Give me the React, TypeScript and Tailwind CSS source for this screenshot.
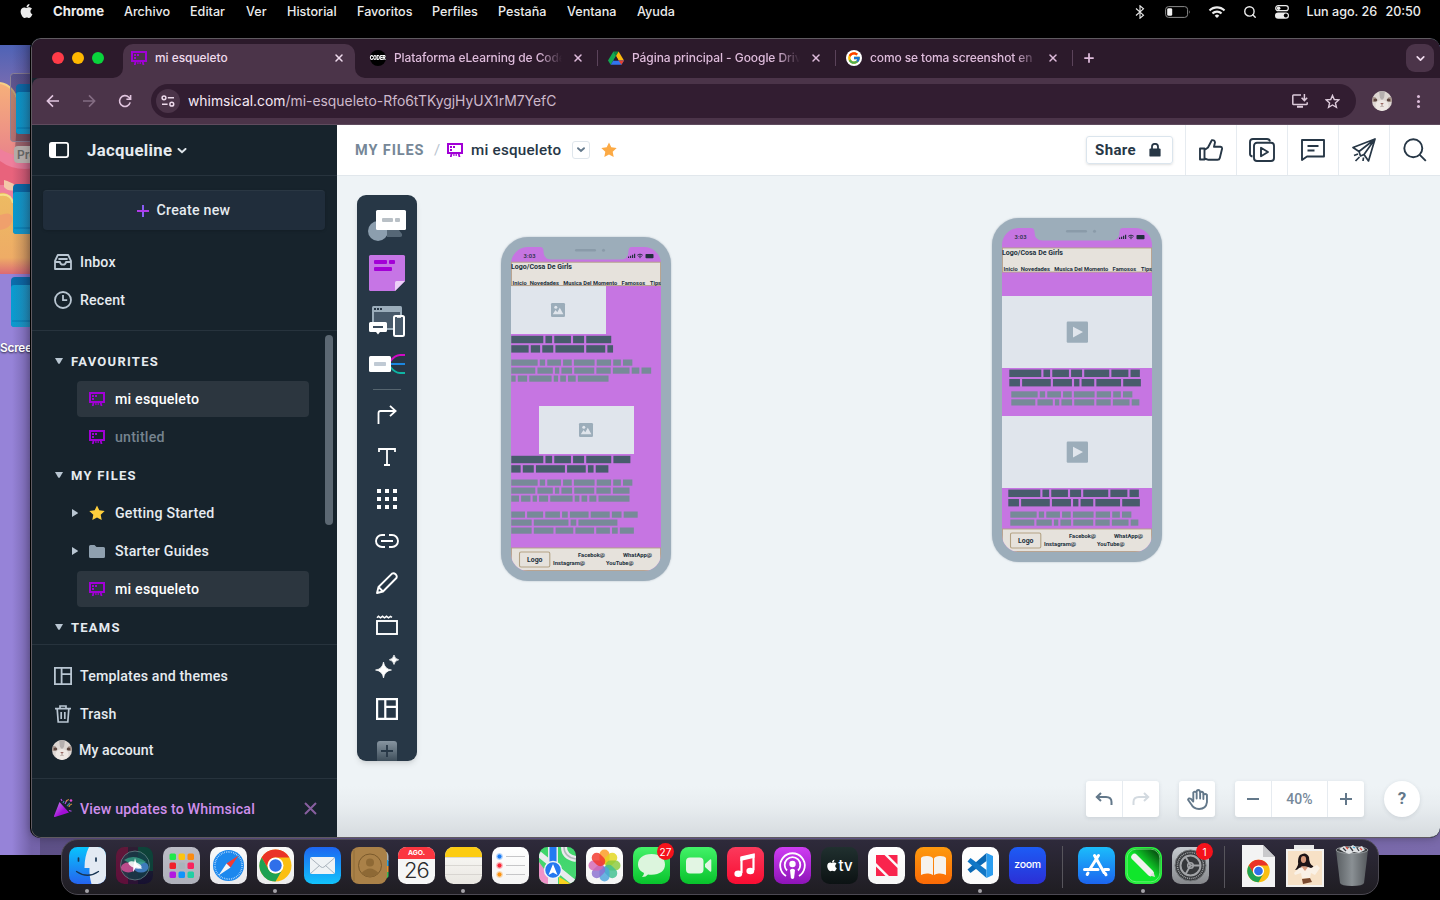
import React from "react";
import { FaApple } from "react-icons/fa";
import { FcGoogle } from "react-icons/fc";
import { MdWifi } from "react-icons/md";
import { ChevronDown, Plus, Search, X } from "lucide-react";

/* ---------- shared drawings ---------- */

function BoardIcon({ className = "" }: { className?: string }) {
  return (
    <svg viewBox="0 0 16 14" className={"h-[14px] w-[16px] shrink-0 " + className} fill="#a100d6">
      <path fillRule="evenodd" d="M0 0h16v11H0zM2 2v7h12v-7z" />
      <rect x="3" y="3" width="2" height="2" />
      <rect x="6" y="3" width="2" height="2" />
      <rect x="3" y="6" width="2" height="2" />
      <path d="M3.6 10.5h1.9L4.7 14H2.9zM6.3 10.5h1.2v2.4H6.3zM8.6 10.5h1.2v2.4H8.6zM10.7 10.5h1.9l.8 3.5h-1.8z" />
    </svg>
  );
}

function Avatar({ className = "" }: { className?: string }) {
  return (
    <svg viewBox="0 0 20 20" className={"h-5 w-5 shrink-0 " + className}>
      <defs>
        <clipPath id="avatarClip"><circle cx="10" cy="10" r="10" /></clipPath>
      </defs>
      <g clipPath="url(#avatarClip)">
        <rect width="20" height="20" fill="#ddd6d2" />
        <path d="M7 0h6l-1 7-2 2-2-2z" fill="#b5afae" />
        <ellipse cx="1.500" cy="8.500" rx="3" ry="2.400" fill="#a8968e" />
        <ellipse cx="18.500" cy="8.500" rx="3" ry="2.400" fill="#a8968e" />
        <ellipse cx="3.400" cy="9" rx="1.900" ry="1.600" fill="#5d463f" />
        <ellipse cx="16.600" cy="9" rx="1.900" ry="1.600" fill="#5d463f" />
        <ellipse cx="10" cy="14.500" rx="6.500" ry="5.500" fill="#eee8e4" />
        <path d="M8.2 12h3.600L10 14z" fill="#9a6a64" />
        <path d="M10 13.700v1.300M8.400 15.600q1.600-1 3.200 0" stroke="#8d7a74" strokeWidth=".6" fill="none" />
      </g>
    </svg>
  );
}

function ChromeLogo() {
  return (
    <g>
      <circle cx="0" cy="0" r="16" fill="#fbbf12" />
      <path d="M-13.86-8A16 16 0 0 1 13.86-8H0A8 8 0 0 0-7 4z" fill="#ea3327" />
      <path d="M-13.86-8L-6.93 4A8 8 0 0 0 6.93 4L0 16A16 16 0 0 1-13.86-8z" fill="#1fa253" />
      <circle r="8" fill="#fff" />
      <circle r="6.2" fill="#2f6fea" />
    </g>
  );
}

/* ---------- desktop ---------- */

function Folder({ y }: { y: number }) {
  return (
    <g>
      <rect x="13" y={y} width="40" height="50" rx="4" fill="#0a6fae" />
      <rect x="13" y={y + 8} width="40" height="42" rx="3" fill="url(#folderFront)" />
      <path d={`M14 ${y + 44}h40`} stroke="#047fb8" />
    </g>
  );
}

function Wallpaper() {
  return (
    <svg viewBox="0 0 40 810" className="h-[810px] w-10" preserveAspectRatio="none">
      <defs>
        <linearGradient id="wallSky" x1="0" y1="0" x2="0" y2="1">
          <stop offset="0" stopColor="#4e63b6" />
          <stop offset="1" stopColor="#8a6fae" />
        </linearGradient>
        <linearGradient id="wallOrange" x1="0" y1="0" x2="0" y2="1">
          <stop offset="0" stopColor="#f6b07a" />
          <stop offset="1" stopColor="#e8808c" />
        </linearGradient>
        <linearGradient id="wallGold" x1="0" y1="0" x2="0" y2="1">
          <stop offset="0" stopColor="#edbb62" />
          <stop offset=".8" stopColor="#eeac66" />
          <stop offset="1" stopColor="#dc6a74" />
        </linearGradient>
        <linearGradient id="wallEdge" x1="0" y1="0" x2="1" y2="0">
          <stop offset=".3" stopColor="#1b1030" stopOpacity="0" />
          <stop offset=".78" stopColor="#1b1030" stopOpacity=".28" />
        </linearGradient>
        <linearGradient id="folderFront" x1="0" y1="0" x2="1" y2="0">
          <stop offset="0" stopColor="#079bd0" />
          <stop offset="1" stopColor="#3fb6e0" />
        </linearGradient>
      </defs>
      <rect width="40" height="810" fill="#9683d8" />
      <rect width="40" height="60" fill="url(#wallSky)" />
      <path d="M0 38Q14 40 18 62V120H0z" fill="url(#wallOrange)" />
      <path d="M18 60h22v60H14z" fill="#a3676c" />
      <path d="M0 38Q14 40 18 58" stroke="#f6cf86" strokeWidth="2" fill="none" />
      <path d="M0 104Q20 116 40 108V180H0z" fill="#ef7f9c" />
      <path d="M0 116Q16 128 40 122V140H0z" fill="#e8637c" />
      <path d="M4 135q14 4 12 10-8 2-12-3z" fill="#f4c8a8" />
      <path d="M0 148Q12 146 14 165L40 175V229H0z" fill="url(#wallGold)" />
      <path d="M0 150Q11 148 13 158" stroke="#f5e08a" strokeWidth="2" fill="none" />
      <path d="M0 170Q14 165 12 176 10 184 0 185z" fill="#f0a06c" />
      <rect x="10.5" y="28.5" width="40" height="68" rx="3" fill="#2b2440" fillOpacity=".3" stroke="#8d8397" />
      <g transform="translate(3 -1)"><Folder y={40} /></g>
      <Folder y={139} />
      <g transform="translate(-2 0)"><Folder y={232} /></g>
      <rect width="40" height="810" fill="url(#wallEdge)" />
    </svg>
  );
}

const menus: [string, string][] = [
  ["Archivo", "w-[66px]"],
  ["Editar", "w-[56px]"],
  ["Ver", "w-[41px]"],
  ["Historial", "w-[70px]"],
  ["Favoritos", "w-[75px]"],
  ["Perfiles", "w-[66px]"],
  ["Pestaña", "w-[69px]"],
  ["Ventana", "w-[70px]"],
  ["Ayuda", "w-[40px]"],
];

function MenuBar() {
  return (
    <div className="flex h-6 items-center whitespace-nowrap bg-black text-[12.6px] font-medium text-[#ececec]">
      <FaApple className="-mt-0.5 ml-[19px] h-4 w-[15px]" />
      <span className="ml-[19px] w-[71px] text-[13.200px] font-bold">Chrome</span>
      {menus.map(([label, width]) => (
        <span key={label} className={width}>{label}</span>
      ))}
      <div className="ml-auto flex items-center pr-[19px]">
        <svg viewBox="0 0 10 14" className="h-[14px] w-[10px]" fill="none" stroke="#ececec" strokeWidth="1.100">
          <path d="M1 3.500l7.500 6.700L5 13.200V.8l3.500 3L1 10.500" />
        </svg>
        <svg viewBox="0 0 26 12" className="ml-[20px] h-3 w-[26px]">
          <rect x=".6" y=".6" width="22" height="10.8" rx="3" fill="none" stroke="#8b8b8b" />
          <rect x="2.2" y="2.2" width="5" height="7.6" rx="1.4" fill="#f2f2f2" />
          <path d="M24 4.2q1.6 1.8 0 3.6z" fill="#8b8b8b" />
        </svg>
        <MdWifi className="ml-[17px] h-[18px] w-[18px]" />
        <Search className="ml-[17px] h-[14px] w-[14px]" strokeWidth={2.4} />
        <svg viewBox="0 0 14 14" className="ml-[18px] h-[14px] w-[14px]">
          <rect x=".7" y=".7" width="12.6" height="5" rx="2.5" fill="none" stroke="#ececec" strokeWidth="1.2" />
          <circle cx="3.6" cy="3.2" r="1.8" fill="#ececec" />
          <rect x="0" y="7.4" width="14" height="6.4" rx="3.2" fill="#ececec" />
          <circle cx="10.8" cy="10.6" r="2" fill="#000" />
        </svg>
        <span className="ml-[17px] w-[79px]">Lun ago. 26</span>
        <span>20:50</span>
      </div>
    </div>
  );
}

/* ---------- browser chrome ---------- */

function TabFavicon({ kind }: { kind: string }) {
  if (kind === "google")
    return (
      <span className="flex h-4 w-4 items-center justify-center rounded-full bg-white">
        <FcGoogle className="h-[14px] w-[14px]" />
      </span>
    );
  if (kind === "drive")
    return (
      <svg viewBox="0 0 16 14" className="h-[14px] w-4">
        <path d="M5.4.5h5.2L8 5z" fill="#0a8a3e" />
        <path d="M5.4.5L0 9.6l2.7 4.2L8 5z" fill="#12a852" />
        <path d="M10.6.5L16 9.6h-5.4L8 5z" fill="#fcb80c" />
        <path d="M5.3 9.6H16l-2.6 4.2H2.7z" fill="#3175ee" />
        <path d="M16 9.6l-2.6 4.2-2.8-4.2z" fill="#e8402f" />
        <path d="M8 5.3l2.5 4.3h-5z" fill="#2c1a2b" />
      </svg>
    );
  return (
    <span className="flex h-4 w-4 items-center justify-center rounded-full bg-black">
      <span className="-mx-1 scale-x-75 text-[6.500px] font-black leading-none tracking-tighter text-white">CODER</span>
    </span>
  );
}

function Tab({ kind, title, spacing }: { kind: string; title: string; spacing: string }) {
  return (
    <div className="flex h-[34px] w-[238px] shrink-0 items-center pl-[11px]">
      <span className="flex w-4 shrink-0 justify-center"><TabFavicon kind={kind} /></span>
      <span className={"ml-2 w-[168px] whitespace-nowrap [mask-image:linear-gradient(to_right,#000_145px,transparent_168px)] " + spacing}>
        {title}
      </span>
      <X className="ml-[10px] h-3 w-3 shrink-0" strokeWidth={3} />
      <span className="ml-[13px] h-4 w-px shrink-0 bg-[#5b435a]" />
    </div>
  );
}

function TabStrip() {
  return (
    <div className="flex h-[39px] items-start bg-[#2c1a2b] pt-[5px] text-[12px] font-medium text-[#dfbcdc]">
      <div className="flex h-[28px] w-[81px] items-center gap-2 pl-[20px]">
        <span className="h-3 w-3 rounded-full bg-[#ff3b48]" />
        <span className="h-3 w-3 rounded-full bg-[#ffb800]" />
        <span className="h-3 w-3 rounded-full bg-[#09d43c]" />
      </div>
      <svg viewBox="0 0 10 10" className="mt-6 h-[10px] w-[10px]"><path d="M0 10A10 10 0 0 0 10 0V10z" fill="#4b3449" /></svg>
      <div className="flex h-[34px] w-[232px] items-center rounded-t-[10px] bg-[#4b3449] pb-[6px] pl-2 text-[#f0dcee]">
        <BoardIcon />
        <span className="ml-2 w-[178px] whitespace-nowrap text-[11.900px]">mi esqueleto</span>
        <X className="h-3 w-3" strokeWidth={3} />
      </div>
      <svg viewBox="0 0 10 10" className="mt-6 h-[10px] w-[10px]"><path d="M0 0A10 10 0 0 0 10 10H0z" fill="#4b3449" /></svg>
      <div className="-ml-[6px] flex h-7 items-center">
        <Tab kind="coder" title="Plataforma eLearning de Code" spacing="tracking-[-0.090px]" />
        <Tab kind="drive" title="Página principal - Google Driv" spacing="tracking-[-0.060px]" />
        <Tab kind="google" title="como se toma screenshot en" spacing="tracking-[-0.120px]" />
        <Plus className="ml-[9px] h-[14px] w-[14px]" strokeWidth={3} />
      </div>
      <div className="ml-auto mr-[6px] flex h-7 w-7 items-center justify-center rounded-[9px] bg-[#4b3449] text-[#f0dcee]">
        <ChevronDown className="h-[13px] w-[13px]" strokeWidth={3.2} />
      </div>
    </div>
  );
}

function Toolbar() {
  return (
    <div className="flex h-[47px] items-center rounded-tl-[8px] border-b border-[#5f4b5e] bg-[#4b3449] text-[#e0c4de]">
      <svg viewBox="0 0 14 14" className="ml-[14px] h-[14px] w-[14px]" fill="none" stroke="currentColor" strokeWidth="1.6">
        <path d="M13 7H1.6M7 1.4L1.4 7 7 12.6" />
      </svg>
      <svg viewBox="0 0 14 14" className="ml-[22px] h-[14px] w-[14px] text-[#836c82]" fill="none" stroke="currentColor" strokeWidth="1.6">
        <path d="M1 7h11.4M7 1.4L12.6 7 7 12.6" />
      </svg>
      <svg viewBox="0 0 14 14" className="ml-[22px] h-[14px] w-[14px]" fill="none" stroke="currentColor" strokeWidth="1.6">
        <path d="M12.2 8.4A5.4 5.4 0 1 1 10.8 3.2L12.4 4.8M12.6 1v4.2H8.4" />
      </svg>
      <div className="ml-[19px] flex h-[34px] w-[1205px] items-center rounded-full bg-[#321d31] pl-[5px]">
        <span className="flex h-6 w-6 items-center justify-center rounded-full bg-[#4b3449]">
          <svg viewBox="0 0 14 12" className="h-3 w-[14px]" fill="none" stroke="#eedbec" strokeWidth="1.5">
            <circle cx="3" cy="2.8" r="1.9" />
            <path d="M6.8 2.8H13M1 9.2h5.6" />
            <circle cx="10.8" cy="9.2" r="1.9" />
          </svg>
        </span>
        <span className="ml-2 whitespace-nowrap text-[13.900px] text-[#cdb9cb]">
          <span className="text-[#f6e9f5]">whimsical.com</span>/mi-esqueleto-Rfo6tTKygjHyUX1rM7YefC
        </span>
        <svg viewBox="0 0 16 14" className="ml-auto h-[14px] w-4" fill="none" stroke="#dccada" strokeWidth="1.5">
          <path d="M9 .9H1.6q-.8 0-.8.8v8q0 .8.8.8h12.8q.8 0 .8-.8V8.2M12.4 0v6M9.6 3.8l2.8 2.8 2.8-2.8" />
          <path d="M5 12.7h6" strokeWidth="2" />
        </svg>
        <svg viewBox="0 0 16 16" className="ml-[17px] mr-[16px] h-[15px] w-[15px]" fill="none" stroke="#dccada" strokeWidth="1.5">
          <path d="M8 1.5l1.9 4.4 4.8.4-3.6 3.2 1.1 4.7L8 11.700l-4.200 2.500 1.100-4.700L1.300 6.300l4.800-.4z" />
        </svg>
      </div>
      <Avatar className="ml-4" />
      <div className="ml-[25px] flex flex-col gap-[2px]">
        <span className="h-[3px] w-[3px] rounded-full bg-[#dcbcd9]" />
        <span className="h-[3px] w-[3px] rounded-full bg-[#dcbcd9]" />
        <span className="h-[3px] w-[3px] rounded-full bg-[#dcbcd9]" />
      </div>
    </div>
  );
}

/* ---------- sidebar ---------- */

function LayoutGlyph({ size }: { size: string }) {
  return (
    <svg viewBox="0 0 18 18" className={size} fill="none" stroke="currentColor" strokeWidth="1.8">
      <path d="M.9.9h16.2v16.2H.9zM7.6.9v16.2M7.6 7.2h9.5" />
    </svg>
  );
}

function SideLink({ icon, label }: { icon: React.ReactNode; label: string }) {
  return (
    <div className="flex h-[38px] items-center gap-2 pl-[21px]">
      <span className="-mt-px flex w-5 justify-center text-[#b9c6d2]">{icon}</span>
      <span className="-ml-px pt-[2px]">{label}</span>
    </div>
  );
}

function SectionTitle({ label }: { label: string }) {
  return (
    <div className="flex h-[38px] items-center pl-[23px] text-[13px] font-bold tracking-[1.250px]">
      <svg viewBox="0 0 8 6" className="h-[6px] w-2"><path d="M0 0h8L4.8 5.4q-.8.8-1.600 0z" fill="#b9c6d2" /></svg>
      <span className="ml-2 pt-[2px]">{label}</span>
    </div>
  );
}

function FileRow({ label, state }: { label: string; state: string }) {
  return (
    <div className="flex h-[38px] items-center pl-[45px]">
      <div className={"flex h-9 w-[232px] items-center rounded-[4px] pl-3 " + (state === "active" ? "bg-[#2c363f] text-white" : "text-[#76838f]")}>
        <BoardIcon />
        <span className="ml-[10px] pt-[2px] tracking-[0.200px]">{label}</span>
      </div>
    </div>
  );
}

function TreeRow({ icon, label }: { icon: React.ReactNode; label: string }) {
  return (
    <div className="flex h-[38px] items-center pl-[40px]">
      <svg viewBox="0 0 6 8" className="h-2 w-[6px]"><path d="M0 0L5.6 3.400q.6.6 0 1.200L0 8z" fill="#b9c6d2" /></svg>
      <span className="ml-[11px] flex w-4 justify-center">{icon}</span>
      <span className="ml-[10px] pt-[2px] tracking-[0.200px]">{label}</span>
    </div>
  );
}

const starPath = "M8 .4l2.300 4.900 5.400.7-4 3.700 1 5.300L8 12.400 3.300 15l1-5.300-4-3.700 5.400-.7z";

function Sidebar() {
  return (
    <aside className="flex w-[305px] shrink-0 flex-col bg-[#17232c] font-[Roboto,sans-serif] text-[14.2px] font-medium tracking-[0.150px] text-[#e6ebf0]">
      <div className="flex h-[51px] items-center border-b border-[#27333d] pl-[17px]">
        <svg viewBox="0 0 20 16" className="h-4 w-5">
          <rect x=".9" y=".9" width="18.2" height="14.2" rx="2" fill="none" stroke="#fff" strokeWidth="1.8" />
          <path d="M1 1h6v14H1z" fill="#fff" />
        </svg>
        <span className="ml-[18px] pt-px text-[16.700px] font-bold tracking-[0.350px]">Jacqueline</span>
        <svg viewBox="0 0 10 6" className="ml-[5px] mt-0.5 h-[6px] w-[10px]" fill="none" stroke="#dfe5ea" strokeWidth="2" strokeLinecap="round">
          <path d="M1.5 1L5 4.2 8.5 1" />
        </svg>
      </div>
      <div className="h-[155px] border-b border-[#27333d] pt-[14px]">
        <div className="mb-[13px] ml-[11px] flex h-10 w-[282px] items-center justify-center rounded-[4px] border-t border-[#2a3743] bg-[#202d3b] pr-px shadow">
          <svg viewBox="0 0 12 12" className="mr-2 h-3 w-3">
            <path d="M6 0v12" stroke="#8b5cf6" strokeWidth="2" />
            <path d="M0 6h12" stroke="#b03be8" strokeWidth="2" />
          </svg>
          <span className="tracking-[0.250px]">Create new</span>
        </div>
        <SideLink
          label="Inbox"
          icon={
            <svg viewBox="0 0 18 16" className="h-4 w-[18px]" fill="none" stroke="currentColor" strokeWidth="1.8" strokeLinejoin="round">
              <path d="M1 7L3.800 1h10.400L17 7v8H1zM1.400 8H6q.4 2.600 3 2.600T12 8h4.600M4.400 5h9.200" />
            </svg>
          }
        />
        <SideLink
          label="Recent"
          icon={
            <svg viewBox="0 0 18 18" className="h-[18px] w-[18px]" fill="none" stroke="currentColor" strokeWidth="1.8">
              <circle cx="9" cy="9" r="8" />
              <path d="M9 4v5.200h4.200" />
            </svg>
          }
        />
      </div>
      <div className="flex h-[314px] overflow-hidden border-b border-[#27333d]">
        <div className="w-[293px] pt-[11px]">
          <SectionTitle label="FAVOURITES" />
          <FileRow label="mi esqueleto" state="active" />
          <FileRow label="untitled" state="muted" />
          <SectionTitle label="MY FILES" />
          <TreeRow label="Getting Started" icon={<svg viewBox="0 0 16 16" className="h-4 w-4"><path d={starPath} fill="#ffcf3d" /></svg>} />
          <TreeRow
            label="Starter Guides"
            icon={<svg viewBox="0 0 16 13" className="h-[13px] w-4"><path d="M0 1.500Q0 0 1.500 0h4l2 2h7Q16 2 16 3.500v8q0 1.500-1.500 1.500h-13Q0 13 0 11.500z" fill="#8fa0af" /></svg>}
          />
          <FileRow label="mi esqueleto" state="active" />
          <SectionTitle label="TEAMS" />
        </div>
        <div className="mt-1 h-[190px] w-2 rounded-full bg-[#5c6873]" />
      </div>
      <div className="h-[134px] border-b border-[#27333d] pt-[12px]">
        <SideLink label="Templates and themes" icon={<LayoutGlyph size="h-[18px] w-[18px]" />} />
        <SideLink
          label="Trash"
          icon={
            <svg viewBox="0 0 16 18" className="h-[18px] w-4" fill="none" stroke="currentColor" strokeWidth="1.7">
              <path d="M0 3.600h16M5 3.500V1h6v2.500M2.200 4l1 13h9.600l1-13M6.200 7v7M9.800 7v7" />
            </svg>
          }
        />
        <div className="flex h-[34px] items-center pl-5">
          <Avatar />
          <span className="ml-[7px] pt-px tracking-[0.050px]">My account</span>
        </div>
      </div>
      <div className="flex flex-1 items-center pl-[21px]">
        <svg viewBox="0 0 20 20" className="h-5 w-5">
          <defs>
            <linearGradient id="cone" x1="0" y1="0" x2="1" y2="1"><stop offset="0" stopColor="#c98af0" /><stop offset=".6" stopColor="#a30fd8" /></linearGradient>
          </defs>
          <path d="M6.500 4L16 14.500 2 19q-1.400.2-1-1z" fill="url(#cone)" />
          <path d="M10 5l1-2M14 8l3-3" stroke="#3f7fa0" strokeWidth="1.300" />
          <path d="M8 1l1 2M12 6l2-4" stroke="#b14be6" strokeWidth="1.200" />
          <path d="M16 9q0-2 3-3M13 3.500q2-2 3-2" stroke="#c0893a" strokeWidth="1.200" fill="none" />
          <circle cx="18" cy="2.500" r="1.300" fill="#e04bd2" />
          <path d="M16 12.500l2.500.8" stroke="#b14be6" strokeWidth="1.200" />
        </svg>
        <span className="ml-[7px] pt-[3px] text-[#cf8fec]">View updates to Whimsical</span>
        <svg viewBox="0 0 13 13" className="ml-auto mr-[20px] h-[13px] w-[13px]"><path d="M1 1l11 11M12 1L1 12" stroke="#875f9f" strokeWidth="2" /></svg>
      </div>
    </aside>
  );
}

/* ---------- Whimsical header ---------- */

const headerIcons: React.ReactNode[] = [
  <svg key="like" viewBox="0 0 24 24" className="h-6 w-6" fill="none" stroke="#273746" strokeWidth="1.900" strokeLinejoin="round">
    <path d="M1 10.500h4.500v11H1zM5.500 12l3.500-2.500 3.800-7.300q2.800-.6 3.200 2.200L15 8.800h6.500q1.800.4 1.500 2.200l-2.200 9q-.4 1.800-2.300 1.800H9.500L5.500 20.500" />
  </svg>,
  <svg key="present" viewBox="0 0 26 24" className="h-6 w-[26px]" fill="none" stroke="#273746" strokeWidth="1.900" strokeLinejoin="round">
    <path d="M3.500 18.500Q1 18 1 16V4q0-3 3-3h14q2.500 0 3 2.500" />
    <rect x="5" y="4.700" width="20" height="18.300" rx="3" />
    <path d="M12 9.800v8.400l7-4.200z" />
  </svg>,
  <svg key="comment" viewBox="0 0 24 22" className="h-[22px] w-6" fill="none" stroke="#273746" strokeWidth="1.900" strokeLinejoin="round">
    <path d="M1 1h22v16.500H6L1 21zM6.500 7h11M6.500 11.500h7" />
  </svg>,
  <svg key="send" viewBox="0 0 24 24" className="h-6 w-6" fill="none" stroke="#273746" strokeWidth="1.700" strokeLinejoin="round">
    <path d="M23 1L1 9.500l6 4zM23 1l-6.500 22-4.500-6.500zM23 1L7 13.500l1.500 4.500 3.500-1.500zM6 16l-4 1.500M7.500 19l-4 4M11.500 19.500L11 23" />
  </svg>,
  <svg key="search" viewBox="0 0 24 24" className="h-6 w-6" fill="none" stroke="#273746" strokeWidth="1.900">
    <circle cx="10.300" cy="10.300" r="9" /><path d="M16.800 16.800l6 6" />
  </svg>,
];

function BoardHeader() {
  return (
    <header className="flex h-[51px] items-center whitespace-nowrap border-b border-[#e1e7ec] bg-white pl-[18px] text-[#273746]">
      <span className="w-[79px] pt-[2px] text-[14.500px] font-bold tracking-[0.900px] text-[#768797]">MY FILES</span>
      <span className="w-[13px] text-[15px] text-[#b8c4cf]">/</span>
      <BoardIcon />
      <span className="ml-2 w-[101px] pt-px text-[15.200px] font-medium tracking-[0.230px]">mi esqueleto</span>
      <span className="flex h-[18px] w-[18px] items-center justify-center rounded-[3px] border border-[#dfe6ec]">
        <svg viewBox="0 0 8 6" className="h-[6px] w-2" fill="none" stroke="#64798c" strokeWidth="1.900" strokeLinecap="round"><path d="M1 1.200L4 4 7 1.200" /></svg>
      </span>
      <svg viewBox="0 0 16 16" className="ml-[11px] h-4 w-4"><path d={starPath} fill="#fcaa45" /></svg>
      <div className="ml-auto flex h-[28px] w-[87px] items-center rounded-[3px] border border-[#dbe5ed] pl-2 shadow-sm">
        <span className="w-[54px] text-[15px] font-bold tracking-[0.400px]">Share</span>
        <svg viewBox="0 0 12 14" className="h-[14px] w-3">
          <rect x=".4" y="5.400" width="11.200" height="8.200" rx="1.200" fill="#273746" />
          <path d="M3 6V3.800a3 3 0 0 1 6 0V6" fill="none" stroke="#273746" strokeWidth="1.800" />
        </svg>
      </div>
      <div className="ml-[12px] flex h-full">
        {headerIcons.map((icon, i) => (
          <span key={i} className="flex w-[51px] items-center justify-center border-l border-[#e6ebf0]">{icon}</span>
        ))}
      </div>
    </header>
  );
}

/* ---------- tool palette ---------- */

const tools: React.ReactNode[] = [
  <svg key="connector" viewBox="0 0 20 20" className="h-5 w-5" fill="none" stroke="#fff" strokeWidth="1.800">
    <path d="M1.500 19V8q0-2 2-2H18M13 .8L18.600 6 13 11.200" />
  </svg>,
  <svg key="text" viewBox="0 0 18 18" className="h-[18px] w-[18px]" fill="none" stroke="#fff" strokeWidth="1.800">
    <path d="M1 4V1h16v3M9 1v16M6 17h6" />
  </svg>,
  <svg key="grid" viewBox="0 0 20 20" className="h-5 w-5" fill="#fff">
    {[0, 8, 16].map((y) => [0, 8, 16].map((x) => <rect key={`${x}-${y}`} x={x} y={y} width="4" height="4" />))}
  </svg>,
  <svg key="link" viewBox="0 0 24 14" className="h-[14px] w-6" fill="none" stroke="#fff" strokeWidth="1.900">
    <path d="M10 1H7A6 6 0 0 0 7 13h3M14 1h3a6 6 0 0 1 0 12h-3M6 7h12" />
  </svg>,
  <svg key="pencil" viewBox="0 0 22 22" className="h-[22px] w-[22px]" fill="none" stroke="#fff" strokeWidth="1.900" strokeLinejoin="round">
    <path d="M1 21l1.500-6L16 1.600q1.800-1 3.600.6t.8 3.800L7 19.500zM2.500 15l4.500 4.500" />
  </svg>,
  <svg key="section" viewBox="0 0 22 20" className="h-5 w-[22px]" fill="none" stroke="#fff" strokeWidth="1.900">
    <rect x="1" y="6" width="20" height="13" />
    <path d="M1 2.800l1.500-1.500 2 1.500 2-1.500 2 1.500 2-1.500 2 1.500 2-1.500 1.500 1" strokeWidth="1.500" />
  </svg>,
  <svg key="sparkle" viewBox="0 0 24 24" className="h-6 w-6" fill="#fff">
    <path d="M8.500 7q1 7 8 8-7 1-8 8-1-7-8-8 7-1 8-8zM19 0q.7 4 4.700 4.800Q19.700 5.500 19 9.500q-.7-4-4.700-4.700Q18.300 4 19 0z" stroke="#fff" strokeWidth=".7" />
  </svg>,
  <span key="layout" className="text-white"><LayoutGlyph size="h-[22px] w-[22px]" /></span>,
];

function Palette() {
  return (
    <div className="flex h-[566px] w-[60px] flex-col items-center overflow-hidden rounded-[9px] bg-[#273746] pt-[6px] shadow-md">
      <svg viewBox="0 0 60 48" className="h-12 w-[60px] shrink-0">
        <circle cx="21" cy="30" r="10" fill="#8c9eae" />
        <path d="M30 20h5l10 13q.6 3-2 3H30z" fill="#566776" />
        <rect x="19" y="9" width="30" height="20" rx="1.500" fill="#fff" />
        <rect x="25" y="17" width="11" height="4" rx="1" fill="#b9c0c6" />
        <rect x="38" y="17" width="5" height="4" rx="1" fill="#b9c0c6" />
      </svg>
      <svg viewBox="0 0 60 48" className="h-12 w-[60px] shrink-0">
        <path d="M13.500 6h33q1.500 0 1.500 1.500V32L38 42H13.500Q12 42 12 40.500v-33Q12 6 13.500 6z" fill="#c675e5" />
        <rect x="17" y="11" width="13" height="4" rx="1" fill="#a300d6" />
        <rect x="32" y="11" width="6" height="4" rx="1" fill="#a300d6" />
        <rect x="17" y="18" width="18" height="4" rx="1" fill="#a300d6" />
        <path d="M38 42V33.500q0-1.500 1.500-1.500H48z" fill="#ecd0f7" />
      </svg>
      <svg viewBox="0 0 60 48" className="h-12 w-[60px] shrink-0">
        <rect x="15" y="9" width="30" height="24" rx="1.500" fill="#9badbb" />
        <path d="M17 15h26v16H17z" fill="#47596a" />
        <path d="M17 11h2v2h-2zM20 11h2v2h-2zM23 11h2v2h-2z" fill="#273746" />
        <path d="M13.500 25h15q1.500 0 1.500 1.500v7q0 1.500-1.500 1.500H23l-2 2.500L19 35h-5.500Q12 35 12 33.500v-7Q12 25 13.500 25z" fill="#fff" />
        <rect x="16" y="29" width="10" height="2" fill="#3b4c5c" />
        <rect x="37" y="19" width="10" height="20" rx="1.500" fill="#47596a" stroke="#fff" strokeWidth="2" />
        <path d="M40 19h4v1.800h-4z" fill="#fff" />
      </svg>
      <svg viewBox="0 0 60 38" className="h-[38px] w-[60px] shrink-0" fill="none" strokeWidth="2">
        <path d="M33 16.500Q38 10 43 10h5" stroke="#cf0bc4" />
        <path d="M33 19h15" stroke="#1c87e0" />
        <path d="M33 21.500Q38 28 43 28h5" stroke="#0fb5a4" />
        <rect x="12" y="11" width="22" height="16" rx="1.500" fill="#fff" />
        <rect x="17" y="17" width="12" height="4" rx=".8" fill="#c0cad4" />
      </svg>
      <div className="flex h-[11px] shrink-0 items-center pt-[2px]"><span className="h-px w-7 bg-[#56656f]" /></div>
      {tools.map((tool, i) => (
        <div key={i} className="flex h-[42px] shrink-0 items-center justify-center">{tool}</div>
      ))}
      <svg viewBox="0 0 20 20" className="mt-[11px] h-5 w-5 shrink-0">
        <defs>
          <linearGradient id="plusTile" x1="0" y1="0" x2="0" y2="1"><stop offset="0" stopColor="#8795a1" /><stop offset="1" stopColor="#374754" /></linearGradient>
        </defs>
        <rect width="20" height="22" rx="3" fill="url(#plusTile)" />
        <path d="M10 4v12M4 10h12" stroke="#273746" strokeWidth="1.800" />
      </svg>
    </div>
  );
}

/* ---------- phone mockups ---------- */

type Row = number[];

const HEAD_A: Row = [96, 20, 50, 33, 75];
const BODY_A: Row = [79, 16, 41, 26, 62, 43, 23, 28];
const BODY_B: Row = [72, 46, 13, 32, 60, 43, 50];

/* Placeholder words; widths are given in thirds of a pixel. */
function Words({ rows, tone, left, top }: { rows: Row[]; tone: string; left: number; top: number }) {
  const head = tone === "head";
  const pitch = head ? 9.4 : 8;
  return (
    <g transform={`translate(${left} ${top})`} fill={head ? "#485c6c" : "#778a98"}>
      {rows.map((row, r) => {
        let x = 0;
        return row.map((w, i) => {
          const start = x;
          x += w / 3 + 2.150;
          return <rect key={`${r}-${i}`} x={start} y={r * pitch} width={w / 3} height={head ? 7.400 : 6.200} />;
        });
      })}
    </g>
  );
}

const nav: [string, number, number][] = [
  ["Inicio", 1.600, 14],
  ["Novedades", 18.700, 29.300],
  ["Musica Del Momento", 52.300, 54],
  ["Famosos", 110.600, 23.500],
  ["Tips", 139, 11],
];

function PhoneShell({ headTop, headHeight, footTop, children }: { headTop: number; headHeight: number; footTop: number; children: React.ReactNode }) {
  return (
    <div className="h-[344px] w-[170px] rounded-[27px] bg-[#9cadba] p-[10px] shadow-[0_0_2px_rgba(80,100,120,0.4)]">
      <div className="h-[324px] w-[150px] overflow-hidden rounded-[17px] bg-[#c675e2]">
        <svg viewBox="0 0 150 324" className="h-[324px] w-[150px] font-[Roboto,sans-serif]" fill="#22303d">
          {children}
          <path d="M29 0h92q-3.500 0-3.500 4 0 8.500-8 8.500h-69q-8 0-8-8.500 0-4-3.500-4z" fill="#9cadba" />
          <rect x="64" y="2" width="21" height="2.600" rx="1.300" fill="#8a9ba9" />
          <circle cx="92.500" cy="3.200" r="1.500" fill="#8a9ba9" />
          <text x="12.500" y="11.300" fontSize="5.800" fontWeight="500" textLength="12">3:03</text>
          <path d="M117 9.600h1.200v1.400H117zM119 8.800h1.200v2.200H119zM121 7.800h1.200v3.200H121zM123 6.800h1.200v4.200H123z" />
          <path d="M126.300 8.200q2.700-2.200 5.400 0M127.500 9.500q1.500-1.200 3 0" fill="none" stroke="#22303d" strokeWidth="1" />
          <circle cx="129" cy="10.600" r=".7" />
          <rect x="134.500" y="7" width="8" height="4.200" rx=".8" />

          <rect x=".4" y={headTop} width="149.200" height={headHeight} fill="#e6e2dc" stroke="#b3a284" strokeWidth=".9" />
          <text x="0" y={headTop + 7} fontSize="7.200" fontWeight="700" textLength="61" lengthAdjust="spacingAndGlyphs">Logo/Cosa De Girls</text>
          {nav.map(([label, x, w]) => (
            <text key={label} x={x} y={headTop + headHeight - 1} fontSize="5.800" fontWeight="700" textLength={w} lengthAdjust="spacingAndGlyphs">{label}</text>
          ))}

          <rect x=".4" y={footTop} width="149.200" height="22.600" fill="#e6e2dc" stroke="#b3a284" strokeWidth=".9" />
          <rect x="8.500" y={footTop + 4} width="30.300" height="15" rx="1.500" fill="none" stroke="#b3a284" strokeWidth="1.100" />
          <text x="16" y={footTop + 13.800} fontSize="6.800" fontWeight="700" textLength="15.500" lengthAdjust="spacingAndGlyphs">Logo</text>
          <text x="67" y={footTop + 9} fontSize="5.900" fontWeight="700" textLength="27" lengthAdjust="spacingAndGlyphs">Facebok@</text>
          <text x="112" y={footTop + 9} fontSize="5.900" fontWeight="700" textLength="29" lengthAdjust="spacingAndGlyphs">WhatApp@</text>
          <text x="42" y={footTop + 17} fontSize="5.900" fontWeight="700" textLength="32" lengthAdjust="spacingAndGlyphs">Instagram@</text>
          <text x="95" y={footTop + 17} fontSize="5.900" fontWeight="700" textLength="27.500" lengthAdjust="spacingAndGlyphs">YouTube@</text>
        </svg>
      </div>
    </div>
  );
}

function Picture({ x, y }: { x: number; y: number }) {
  return (
    <g transform={`translate(${x} ${y})`}>
      <rect width="95" height="48" fill="#e0e5ec" />
      <g transform="translate(40 17)">
        <rect width="14" height="14" rx="1.200" fill="#9cadba" />
        <circle cx="4.800" cy="4.200" r="1.500" fill="#e0e5ec" />
        <path d="M1.800 11.300L4.500 7l1.800 2.300L8.800 4.700l3.600 6.600z" fill="#e0e5ec" />
      </g>
    </g>
  );
}

function Video({ y }: { y: number }) {
  return (
    <g transform={`translate(0 ${y})`}>
      <rect width="150" height="72" fill="#e0e5ec" />
      <rect x="64.700" y="25.500" width="21.300" height="21.300" rx="1.200" fill="#9cadba" />
      <path d="M71 30.700v10.800l10-5.400z" fill="#e0e5ec" />
    </g>
  );
}

function PhoneArticles() {
  return (
    <PhoneShell headTop={15.200} headHeight={23.400} footTop={301}>
      <Picture x={0} y={39} />
      <Words tone="head" left={0.300} top={88.800} rows={[HEAD_A, [52, 28, 33, 86, 57, 17]]} />
      <Words tone="body" left={0.300} top={112.500} rows={[BODY_A, [...BODY_B, 23, 29], [13, 28, 67, 13, 17, 23, 92]]} />
      <Picture x={28} y={159} />
      <Words tone="head" left={0.300} top={208.800} rows={[[...HEAD_A, 51], [28, 33, 87, 56, 17, 38]]} />
      <Words tone="body" left={0.300} top={232.500} rows={[BODY_A, BODY_B, [23, 28, 13, 27, 67, 14, 17, 21, 93]]} />
      <Words tone="body" left={0.300} top={264.500} rows={[[41, 48, 44, 17, 56, 57, 29, 42], [61, 104, 17, 117], [61, 59, 53, 56, 41, 17, 42]]} />
    </PhoneShell>
  );
}

const VIDEO_HEAD: Row[] = [[...HEAD_A, 51, 28], [32, 86, 57, 16, 38, 74, 53]];
const VIDEO_BODY: Row[] = [BODY_A, [...BODY_B, 23]];

function PhoneVideos() {
  return (
    <PhoneShell headTop={20} headHeight={24} footTop={301}>
      <Video y={68} />
      <Words tone="head" left={7.300} top={141.600} rows={VIDEO_HEAD} />
      <Words tone="body" left={9.300} top={163.300} rows={VIDEO_BODY} />
      <Video y={188} />
      <Words tone="head" left={6.300} top={261.600} rows={VIDEO_HEAD} />
      <Words tone="body" left={8.300} top={283.500} rows={VIDEO_BODY} />
    </PhoneShell>
  );
}

/* ---------- canvas ---------- */

function CanvasControls() {
  return (
    <div className="flex items-center gap-5 text-[#63788a]">
      <div className="flex h-9 w-[73px] items-center rounded-[3px] bg-white shadow-[0_1px_4px_rgba(40,55,70,0.12)]">
        <span className="flex h-full w-[37px] items-center justify-center border-r border-[#e6ebf0]">
          <svg viewBox="0 0 18 14" className="h-[14px] w-[18px]" fill="none" stroke="currentColor" strokeWidth="2"><path d="M1.500 5h9.500q5.500 0 5.500 5v3M6 1L1.800 5 6 9" /></svg>
        </span>
        <span className="flex flex-1 items-center justify-center text-[#d3dae0]">
          <svg viewBox="0 0 18 14" className="h-[14px] w-[18px]" fill="none" stroke="currentColor" strokeWidth="2"><path d="M16.500 5H7q-5.500 0-5.500 5v3M12 1l4.200 4L12 9" /></svg>
        </span>
      </div>
      <div className="flex h-9 w-9 items-center justify-center rounded-[3px] bg-white shadow-[0_1px_4px_rgba(40,55,70,0.12)]">
        <svg viewBox="0 0 20 20" className="h-[21px] w-[21px]" fill="none" stroke="currentColor" strokeWidth="1.800" strokeLinecap="round" strokeLinejoin="round">
          <path d="M6 11V3.500q1.600-2 3 0Q9.200 1 10.800 1t1.700 2.500q1.400-1.800 3 0v2q2-1.600 3.500 0v7q-.8 6.500-7.500 6.500-5.500 0-7.500-4.500L1 10.300q.5-2 2.700-1L6 12M9.200 3.500V9M12.500 3.500V9M15.600 5V9.500" />
        </svg>
      </div>
      <div className="flex h-9 items-center rounded-[3px] bg-white shadow-[0_1px_4px_rgba(40,55,70,0.12)]">
        <span className="flex h-full w-[37px] items-center justify-center border-r border-[#e6ebf0]"><span className="h-[2px] w-3 bg-[#63788a]" /></span>
        <span className="flex h-full w-[56px] items-center justify-center border-r border-[#e6ebf0] text-[14px] font-medium tracking-[0.100px] text-[#76889a]">40%</span>
        <span className="flex w-9 items-center justify-center">
          <svg viewBox="0 0 12 12" className="h-3 w-3"><path d="M6 0v12M0 6h12" stroke="#63788a" strokeWidth="2" /></svg>
        </span>
      </div>
      <span className="flex h-9 w-9 items-center justify-center rounded-full bg-white text-[17px] font-bold shadow-[0_1px_4px_rgba(40,55,70,0.12)]">?</span>
    </div>
  );
}

function Board() {
  return (
    <main className="flex flex-1 flex-col font-[Roboto,sans-serif]">
      <BoardHeader />
      <div className="relative flex-1 bg-[linear-gradient(to_bottom,#eef3f6_0,#eef3f6_610px,#e8edf0_630px,#d6dbdf_661px)]">
        <div className="absolute left-5 top-[19px]"><Palette /></div>
        <div className="absolute left-[164px] top-[61px]"><PhoneArticles /></div>
        <div className="absolute left-[655px] top-[42px]"><PhoneVideos /></div>
        <div className="absolute bottom-5 right-[20px]"><CanvasControls /></div>
      </div>
    </main>
  );
}

/* ---------- dock ---------- */

function Tile({ id, from, to, children }: { id: string; from: string; to: string; children?: React.ReactNode }) {
  return (
    <svg viewBox="0 0 37 37" className="h-[37px] w-[37px]">
      <defs>
        <linearGradient id={`tile-${id}`} x1="0" y1="0" x2="0" y2="1"><stop offset="0" stopColor={from} /><stop offset="1" stopColor={to} /></linearGradient>
        <clipPath id={`clip-${id}`}><rect width="37" height="37" rx="8.500" /></clipPath>
      </defs>
      <g clipPath={`url(#clip-${id})`}>
        <rect width="37" height="37" fill={`url(#tile-${id})`} />
        {children}
      </g>
    </svg>
  );
}

function DockItem({ badge, running, width = "w-[37px]", children }: { badge?: string; running?: boolean; width?: string; children: React.ReactNode }) {
  return (
    <div className={"relative flex h-[37px] shrink-0 items-center justify-center " + width}>
      {children}
      {badge && (
        <span className="absolute -right-[4px] -top-[4px] flex h-[17px] w-[17px] items-center justify-center rounded-full bg-[#f5121b] text-[10px] leading-none text-white">{badge}</span>
      )}
      {running && <span className="absolute -bottom-[9px] left-4 h-1 w-1 rounded-full bg-[#a5a3a8]" />}
    </div>
  );
}

const padColors = ["#1fe84b", "#fcc40f", "#fb8a10", "#f0202b", "#a9b5bc", "#f9245f", "#b219e0", "#0f94fb", "#20cfa3"];
const petals = ["#fb9a1e", "#e2d51c", "#8acb3c", "#3fbf8f", "#4aa3dc", "#8a6fd0", "#d466b5", "#f2352a"];

function Dock() {
  return (
    <div className="flex h-[56px] w-[1318px] rounded-[17px] border border-[#4c4952] bg-[linear-gradient(to_bottom,#2e2a3b,#1f1d22)] pl-[7px] pt-[7px]">
      <div className="flex gap-[10px]">
        <DockItem running>
          <Tile id="finder" from="#09c4fd" to="#2563ee">
            <path d="M20 0q-4.500 9-4.500 21h5q-.5 7 2 16H37V0z" fill="#e3eaf3" />
            <path d="M9.500 11v3M27 11v3" stroke="#173452" strokeWidth="1.700" strokeLinecap="round" />
            <path d="M7.500 24.500q11 7.500 22 0" stroke="#173452" strokeWidth="1.300" fill="none" strokeLinecap="round" />
          </Tile>
        </DockItem>
        <DockItem>
          <Tile id="siri" from="#1c2d2e" to="#171031">
            <rect width="12" height="37" fill="#7d0f3f" opacity=".7" />
            <rect x="12" width="10" height="37" fill="#3a1638" opacity=".6" />
            <path d="M22 0h15v24H22z" fill="#0b4a3c" opacity=".8" />
            <circle cx="19" cy="18.500" r="14.500" fill="#14414c" fillOpacity=".7" stroke="#7f9a9b" strokeOpacity=".6" />
            <ellipse cx="12.500" cy="20.500" rx="7.500" ry="5" fill="#e0539c" opacity=".8" />
            <ellipse cx="25" cy="20" rx="7.500" ry="5.500" fill="#4a8ad8" opacity=".8" />
            <path d="M8 13q10-7 22 2l-10 5z" fill="#38a58a" opacity=".75" />
            <ellipse cx="19" cy="18" rx="7" ry="3" fill="#fff" opacity=".85" transform="rotate(20 19 18)" />
            <path d="M19 11l1.500 6 6 5-6.500-2-3 5 .5-6z" fill="#fff" />
          </Tile>
        </DockItem>
        <DockItem>
          <Tile id="launch" from="#bcbcc6" to="#aeb0ba">
            {padColors.map((c, i) => (
              <rect key={i} x={6.500 + (i % 3) * 9} y={6.500 + Math.floor(i / 3) * 9} width="6.500" height="6.500" rx="1.500" fill={c} />
            ))}
          </Tile>
        </DockItem>
        <DockItem>
          <Tile id="safari" from="#fafafa" to="#e9e9ec">
            <circle cx="18.500" cy="18.500" r="15.500" fill="#1c88ee" />
            <circle cx="18.500" cy="18.500" r="13.600" fill="none" stroke="#d8ecff" strokeWidth="1.600" strokeDasharray=".6 1.200" />
            <path d="M28.500 8.500L16.500 16.500l4 4z" fill="#f13a34" />
            <path d="M8.500 28.500l8-12 4 4z" fill="#f2f4f7" />
          </Tile>
        </DockItem>
        <DockItem running>
          <Tile id="chrome" from="#fafafa" to="#ececec"><g transform="translate(18.500 18.500)"><ChromeLogo /></g></Tile>
        </DockItem>
        <DockItem>
          <Tile id="mail" from="#1d66f1" to="#12c3fc">
            <rect x="6" y="10" width="25" height="17" rx="2" fill="#eef2f5" />
            <path d="M6.500 11l10.500 9q1.500 1 3 0l10.500-9M6.500 26.500l9-8M30.500 26.500l-9-8" stroke="#a1acb5" strokeWidth=".9" fill="none" />
          </Tile>
        </DockItem>
        <DockItem>
          <svg viewBox="0 0 38 37" className="-mr-px h-[37px] w-[38px] shrink-0">
            <path d="M30 5h6q1.500 2 1.500 4v5H30z" fill="#aeb5b8" />
            <path d="M33 13h4.500v6H33z" fill="#26a0e0" />
            <path d="M33 19h4.500v6H33z" fill="#e8912c" />
            <path d="M33 25h4.500v4q0 2-4.500 3z" fill="#3fbb52" />
            <rect width="36" height="37" rx="8" fill="#aa8148" />
            <path d="M3 3v31" stroke="#8e6935" strokeWidth=".8" />
            <circle cx="19" cy="18.500" r="11.500" fill="none" stroke="#7b5a2c" strokeWidth="1" />
            <circle cx="19" cy="15.500" r="4" fill="#8e6935" />
            <path d="M10.500 26q8.500-9 17 0-8.500 8-17 0z" fill="#8e6935" />
          </svg>
        </DockItem>
        <DockItem>
          <div className="flex h-[37px] w-[37px] flex-col items-center overflow-hidden rounded-[8.500px] bg-[#f6f6f6]">
            <span className="flex h-3 w-full shrink-0 items-center justify-center bg-[#fb3640] text-[6.800px] font-bold text-white">AGO.</span>
            <span className="text-[22px] font-light leading-[23px] tracking-[-0.800px] text-[#2c2c2e]">26</span>
          </div>
        </DockItem>
        <DockItem running>
          <Tile id="notes" from="#fbfbf8" to="#e9e6e1">
            <rect width="37" height="10" fill="#fccc12" />
            <path d="M0 10.500h37M0 18.500h37M0 27.500h37" stroke="#cfccc7" strokeWidth=".7" />
          </Tile>
        </DockItem>
        <DockItem>
          <Tile id="reminders" from="#fff" to="#f4f4f4">
            {["#1a7cf5", "#fa2536", "#fb9312"].map((c, i) => (
              <g key={c}>
                <circle cx="7.500" cy={9.500 + i * 9} r="3" fill="none" stroke={c} strokeOpacity=".4" strokeWidth=".8" />
                <circle cx="7.500" cy={9.500 + i * 9} r="2.200" fill={c} />
                <path d={`M14 ${9.500 + i * 9}h19`} stroke="#bfbfc2" strokeWidth=".9" />
              </g>
            ))}
          </Tile>
        </DockItem>
        <DockItem>
          <Tile id="maps" from="#3ed56b" to="#49d873">
            <path d="M0 15l16 22H0z" fill="#ef92c8" />
            <path d="M0 7l37 30M25 0q0 10 12 12" stroke="#e9ebee" strokeWidth="6" fill="none" />
            <path d="M25 0q0 10 12 12" stroke="#b4b8bd" strokeWidth="1.500" fill="none" />
            <path d="M20 37v-7l12 7z" fill="#fbd21f" />
            <path d="M9 0h10v37H9z" fill="#e9ebee" />
            <path d="M10.500 0h7v18h-7z" fill="#2379f2" />
            <circle cx="14" cy="23" r="8.500" fill="#2478f0" stroke="#eef2f6" strokeWidth="1.500" />
            <path d="M14 17l4.500 11-4.500-2.500L9.500 28z" fill="#fff" />
          </Tile>
        </DockItem>
        <DockItem>
          <Tile id="photos" from="#fff" to="#f3f3f3">
            <g transform="translate(18.500 18.500)">
              {petals.map((c, i) => (
                <rect key={c} x="-5" y="-16" width="10" height="15" rx="5" fill={c} fillOpacity=".82" transform={`rotate(${i * 45})`} />
              ))}
            </g>
          </Tile>
        </DockItem>
        <DockItem badge="27">
          <Tile id="messages" from="#45f36a" to="#08c32c">
            <path d="M18.500 7C10 7 5 11.500 5 17.500c0 4 2.500 7 6 8.500q0 2-2 4 4 0 6-2.500 1.700.3 3.500.3C27 27.800 32 23.500 32 17.500S27 7 18.500 7z" fill="#dcf5dd" />
          </Tile>
        </DockItem>
        <DockItem>
          <Tile id="facetime" from="#42f268" to="#08c22b">
            <rect x="6" y="10.500" width="17.500" height="16" rx="4" fill="#e2f5e3" />
            <path d="M25 17l5-4.500q1.300-.7 1.300 1v10q0 1.700-1.300 1L25 20z" fill="#e2f5e3" />
          </Tile>
        </DockItem>
        <DockItem>
          <Tile id="music" from="#fb3a5c" to="#f90d32">
            <path d="M14.500 26V11l12-2.800v15" stroke="#fff" strokeWidth="2.200" fill="none" />
            <path d="M13.400 9.500l14.200-3.300v4.500l-14.200 3.200z" fill="#fff" />
            <ellipse cx="11.300" cy="26.800" rx="3.900" ry="3.200" fill="#fff" />
            <ellipse cx="23.300" cy="24" rx="3.900" ry="3.200" fill="#fff" />
          </Tile>
        </DockItem>
        <DockItem>
          <Tile id="podcasts" from="#cf3df3" to="#8e14b8">
            <path d="M12 29A12.300 12.300 0 1 1 25 29" stroke="#fff" strokeWidth="1.800" fill="none" />
            <path d="M13 23.500A7.800 7.800 0 1 1 24 23.500" stroke="#fff" strokeWidth="1.800" fill="none" />
            <circle cx="18.500" cy="17" r="3.200" fill="#fff" />
            <path d="M16 23q2.500-2.300 5 0l-.9 8q-1.600 2-3.200 0z" fill="#fff" />
          </Tile>
        </DockItem>
        <DockItem>
          <div className="flex h-[37px] w-[37px] items-center justify-center rounded-[8.500px] bg-[linear-gradient(to_bottom,#20302f,#0c1213)] text-white">
            <FaApple className="h-[13px] w-3" />
            <span className="pb-px text-[15px] font-medium leading-none">tv</span>
          </div>
        </DockItem>
        <DockItem>
          <Tile id="news" from="#fff" to="#f6f6f6">
            <path d="M8 8h8.500L29.500 21v8H21L8 16z" fill="#f9244d" />
            <path d="M20 8h9.500v9.500zM8 19.500L17.500 29H8z" fill="#f9244d" />
          </Tile>
        </DockItem>
        <DockItem>
          <Tile id="books" from="#fd9a0e" to="#fb6a06">
            <path d="M6 11q1-2 6-2 5 0 6 2.500V28q-2.500-2-6-1.500-4 0-6 1.500zM31 11q-1-2-6-2-5 0-6 2.500V28q2.500-2 6-1.500 4 0 6 1.500z" fill="#f6f2ec" />
          </Tile>
        </DockItem>
        <DockItem running>
          <Tile id="code" from="#fff" to="#fafafa">
            <path d="M5.500 22.500L24.500 6v8L8.500 26z" fill="#0a68b4" />
            <path d="M5.500 14.500L24.500 31v-8L8.500 11z" fill="#1177c6" />
            <path d="M24.500 6l6.500 3v19l-6.500 3z" fill="#2a9df0" />
          </Tile>
        </DockItem>
        <DockItem>
          <div className="flex h-[37px] w-[37px] items-center justify-center rounded-[8.500px] bg-[linear-gradient(to_bottom,#1d5cf5,#2b2fd6)] text-[10.500px] font-medium leading-none tracking-[-0.300px] text-white">
            zoom
          </div>
        </DockItem>
        <span className="ml-[6px] mr-[5px] mt-[-1px] h-[42px] w-px bg-[#57555c]" />
        <DockItem>
          <Tile id="store" from="#1bbdfb" to="#1c64ef">
            <g stroke="#fff" strokeWidth="3" strokeLinecap="round" fill="none">
              <path d="M16.500 8.500l9.500 17M20.500 8.500L12 22M6.500 22.500h13.500M26.500 22.500h4M10 26l-.8 1.500M27 26l1 1.800" />
            </g>
          </Tile>
        </DockItem>
        <DockItem running>
          <svg viewBox="0 0 37 37" className="h-[37px] w-[37px]">
            <defs><linearGradient id="pen" x1="0" y1="1" x2="1" y2="0"><stop offset=".5" stopColor="#10e62b" /><stop offset=".85" stopColor="#075c12" /></linearGradient></defs>
            <rect x=".8" y=".8" width="35.400" height="35.400" rx="10" fill="url(#pen)" stroke="#29f13f" strokeWidth="1.600" />
            <rect x="2.200" y="2.200" width="32.600" height="32.600" rx="9" fill="none" stroke="#9df5a4" strokeWidth=".6" />
            <path d="M9.500 10l16 16" stroke="#f1f1ee" strokeWidth="6.500" strokeLinecap="round" />
            <path d="M25 28.500l3.500-3.500 1.500 5z" fill="#dedfd8" />
          </svg>
        </DockItem>
        <DockItem badge="1">
          <Tile id="settings" from="#c6cbd0" to="#85878b">
            <circle cx="18.500" cy="18.500" r="15.500" fill="#36383b" stroke="#76797c" />
            <circle cx="18.500" cy="18.500" r="13" fill="none" stroke="#9ea0a3" strokeWidth="1.600" strokeDasharray="1 .9" />
            <circle cx="18.500" cy="18.500" r="10" fill="none" stroke="#a2a4a7" strokeWidth="2" />
            <circle cx="18.500" cy="18.500" r="2.800" fill="none" stroke="#a2a4a7" strokeWidth="1.500" />
            <path d="M18.500 18.500h10M18.500 18.500l-5-8.700M18.500 18.500l-5 8.700" stroke="#a2a4a7" strokeWidth="1.800" />
          </Tile>
        </DockItem>
        <span className="ml-[5px] mr-[7px] mt-[-1px] h-[42px] w-px bg-[#57555c]" />
        <DockItem width="w-[33px]">
          <svg viewBox="0 0 33 42" className="h-[42px] w-[33px] shrink-0">
            <path d="M0 0h21l12 12v30H0z" fill="#f3f3f4" />
            <path d="M21 0v12h12z" fill="#c9c9cc" />
            <g transform="translate(16.500 26) scale(.7)"><ChromeLogo /></g>
          </svg>
        </DockItem>
        <DockItem width="w-[41px]">
          <svg viewBox="0 0 39 42" className="h-[42px] w-[39px] shrink-0">
            <path d="M8 0h20v4H8z" fill="#e9e9e9" />
            <rect y="4" width="38" height="38" fill="#f4f2ef" />
            <rect x="2" y="6" width="34" height="34" fill="#f7e1c6" />
            <path d="M14 10q6-4 9 2 0 7 4 9l2 5-6-1-8-1-6 1q4-5 3-8 0-5 2-7z" fill="#1d1416" />
            <ellipse cx="17.500" cy="14.500" rx="2.600" ry="3.400" fill="#d99a7c" />
            <path d="M13 23q6-3 12 0l6-3 3 3-5 7-4-2-1 5h-8l-1-5-6 2-1-2z" fill="#faf1e6" />
            <path d="M15 21l4 5 3-4z" fill="#d99a7c" />
            <path d="M16 34l8-1 2 4-9 2z" fill="#7b4a2e" />
          </svg>
        </DockItem>
        <DockItem width="w-[34px]">
          <svg viewBox="0 0 34 42" className="-ml-[3px] h-[42px] w-[34px] shrink-0">
            <defs><linearGradient id="bin" x1="0" y1="0" x2="1" y2="0"><stop offset="0" stopColor="#5a5f63" /><stop offset=".5" stopColor="#8a9094" /><stop offset="1" stopColor="#54585c" /></linearGradient></defs>
            <path d="M1 5l4 33q1 3 12 3t12-3L33 5z" fill="url(#bin)" />
            <ellipse cx="17" cy="5" rx="16" ry="3.500" fill="#3a3d40" stroke="#a6abae" strokeWidth=".8" />
            <path d="M4 4l5-3 4 2 5-3 4 3 5-2 3 4-6 3-5-1-5 2-5-2z" fill="#dfe2e4" />
            <path d="M8 3l3 3M15 2l3 4M22 3l2 3" stroke="#3b3b44" strokeWidth="1.300" />
            <path d="M11 2l2 2M25 3l2 2" stroke="#e24c3c" strokeWidth="1.300" />
            <path d="M18 2l2 1" stroke="#3aa7d8" strokeWidth="1.300" />
          </svg>
        </DockItem>
      </div>
    </div>
  );
}

/* ---------- screen ---------- */

export default function App() {
  return (
    <div className="relative h-[900px] w-[1440px] overflow-hidden bg-black font-[Inter,sans-serif]">
      <MenuBar />
      <div className="absolute left-0 top-[45px] h-[810px] w-full overflow-hidden bg-[linear-gradient(to_right,#5c4f85,#7a6aab)]">
        <Wallpaper />
        <span className="absolute left-[14px] top-[101px] h-[17px] w-10 rounded-[4px] bg-[#b3aba8] pl-[3px] text-[12px] font-semibold leading-[17px] text-[#666]">Pro</span>
        <span className="absolute left-0 top-[295px] text-[11.800px] font-semibold leading-[16px] tracking-[-0.200px] text-white [text-shadow:0_1px_2px_rgba(0,0,0,0.7)]">Screen</span>
      </div>
      <div className="absolute left-[30px] top-[38px] flex h-[800px] w-[1410px] flex-col overflow-hidden rounded-[10px] border-l border-black bg-[#17232c] shadow-[0_0_10px_rgba(0,0,0,0.3)]">
        <div className="flex h-[800px] flex-col overflow-hidden rounded-[10px] border border-r-0 border-[#5f5a60]">
          <TabStrip />
          <Toolbar />
          <div className="flex min-h-0 flex-1">
            <Sidebar />
            <Board />
          </div>
        </div>
      </div>
      <div className="absolute left-[61px] top-[839px]"><Dock /></div>
    </div>
  );
}
